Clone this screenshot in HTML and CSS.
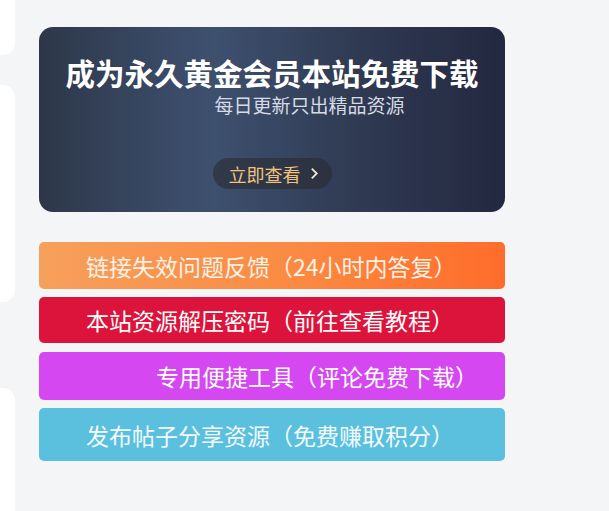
FILE: index.html
```html
<!DOCTYPE html>
<html lang="zh-CN">
<head>
<meta charset="utf-8">
<title>会员</title>
<link rel="stylesheet" href="styles.css">
</head>
<body>
<div class="page">
  <aside class="side">
    <div class="side-card side-card-1"></div>
    <div class="side-card side-card-2"></div>
    <div class="side-card side-card-3"></div>
  </aside>
  <main class="main">
    <section class="banner">
      <h2 class="banner-title">成为永久黄金会员本站免费下载</h2>
      <p class="banner-sub">每日更新只出精品资源</p>
      <a class="banner-btn" href="#">立即查看<svg class="chev" viewBox="0 0 10 14" width="9" height="13"><path d="M2 1.5 L7.5 7 L2 12.5" fill="none" stroke="currentColor" stroke-width="2"/></svg></a>
    </section>
    <nav class="links">
      <a class="link link-orange" href="#">链接失效问题反馈（24小时内答复）</a>
      <a class="link link-red" href="#">本站资源解压密码（前往查看教程）</a>
      <a class="link link-purple" href="#">专用便捷工具（评论免费下载）</a>
      <a class="link link-blue" href="#">发布帖子分享资源（免费赚取积分）</a>
    </nav>
  </main>
</div>
</body>
</html>
```

FILE: styles.css
```css
html, body {
  margin: 0;
  padding: 0;
}
body {
  background: #f4f5f7;
  font-family: "Noto Sans CJK SC", "Noto Sans", sans-serif;
  width: 609px;
  height: 511px;
  overflow: hidden;
}
.page {
  display: flex;
  height: 511px;
  overflow: hidden;
}
.side {
  width: 15px;
  display: flex;
  flex-direction: column;
  gap: 30px;
}
.side-card {
  flex-shrink: 0;
  background: #ffffff;
  border-radius: 0 12px 12px 0;
}
.side-card-1 { height: 55px; border-radius: 0 0 12px 0; }
.side-card-2 { height: 217px; }
.side-card-3 { height: 140px; margin-top: 56px; }
.main {
  padding: 27px 0 0 24px;
  width: 466px;
}
.banner {
  height: 185px;
  border-radius: 14px;
  background: linear-gradient(90deg, #2d3749 0%, #3b4c69 30%, #3d506e 38%, #313c55 65%, #232840 100%);
  display: flex;
  flex-direction: column;
  align-items: center;
  box-sizing: border-box;
  padding-top: 28px;
}
.banner-title {
  margin: 0;
  font-size: 29.5px;
  line-height: 34px;
  font-weight: 700;
  color: #ffffff;
}
.banner-sub {
  margin: 4px 0 0 0;
  padding-left: 75px;
  font-size: 19px;
  line-height: 24px;
  color: #d6dbe4;
}
.banner-btn {
  margin-top: 41px;
  display: flex;
  align-items: center;
  gap: 9px;
  height: 31px;
  padding: 0 13px 0 16px;
  border-radius: 16px;
  background: rgba(40, 40, 44, 0.55);
  color: #f0c47e;
  font-size: 18px;
  text-decoration: none;
}
.chev { color: #f0e6d6; }
.links {
  margin-top: 30px;
  display: flex;
  flex-direction: column;
}
.link {
  display: flex;
  align-items: center;
  box-sizing: border-box;
  padding-left: 47px;
  border-radius: 5px;
  color: #ffffff;
  font-size: 23px;
  text-decoration: none;
}
.link-orange {
  height: 47px;
  background: linear-gradient(90deg, #f6a05c 0%, #fb8a42 55%, #ff6c2b 100%);
  color: #fdf1e6;
}
.link-red {
  height: 46px;
  margin-top: 8px;
  background: #dc143c;
}
.link-purple {
  height: 48px;
  margin-top: 9px;
  padding-left: 117px;
  background: #d447f1;
}
.link-blue {
  height: 53px;
  margin-top: 8px;
  background: #5bc0de;
  color: #f2fbfe;
}
```
